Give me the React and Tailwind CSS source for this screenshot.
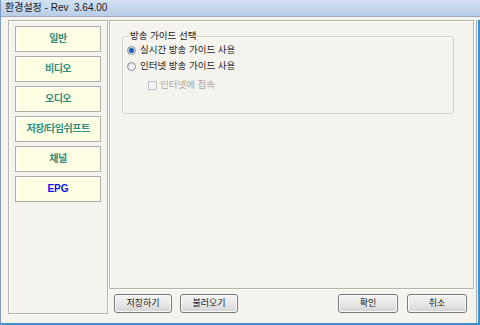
const FONT = "[font-family:'Liberation_Sans','Noto_Sans_CJK_KR',sans-serif]";

const tabs = [
  { label: "일반" },
  { label: "비디오" },
  { label: "오디오" },
  { label: "저장/타임쉬프트" },
  { label: "채널" },
  { label: "EPG", active: true },
];

function Radio({ checked, label }) {
  return (
    <div className="flex items-center h-[16px] gap-[4px]">
      <span className="w-[9px] h-[9px] rounded-full border border-[#8a8f96] bg-gradient-to-br from-[#d8dbe0] to-[#ffffff] flex items-center justify-center">
        {checked && <span className="w-[5px] h-[5px] rounded-full bg-[#1d5fb8] shadow-[0_0_1px_#6aa6e8]" />}
      </span>
      <span className="text-[9.5px] text-[#1a1a1a] leading-none">{label}</span>
    </div>
  );
}

function Button({ children, w }) {
  return (
    <button className={`${w} h-[19px] rounded-[3px] border border-[#7a7a7a] bg-gradient-to-b from-[#f4f4f4] via-[#e8e8e8] to-[#d3d3d3] shadow-[inset_0_0_0_1px_#fbfbfb] text-[9px] text-[#1a1a1a] leading-none`}>
      {children}
    </button>
  );
}

export default function App() {
  return (
    <div className={`w-[480px] h-[325px] overflow-hidden bg-[#f4f3ee] flex flex-col border-l border-[#7d9cc2] border-b-2 border-b-[#3b8fd2] ${FONT}`}>
      {/* Title bar */}
      <div className="h-[17px] shrink-0 bg-gradient-to-b from-[#d3e1f2] to-[#b9cde7] border-b border-[#9aa9bb] flex items-center pl-[4px]">
        <span className="text-[10px] text-[#1a1a1a] whitespace-pre leading-none">환경설정 - Rev  3.64.00</span>
      </div>

      {/* Body */}
      <div className="flex-1 flex pt-[3px] pl-[7px]">
        {/* Left tabs */}
        <div className="w-[100px] h-[294px] border border-[#b5b3aa] shadow-[inset_1px_1px_0_#ffffff,1px_1px_0_#ffffff] pt-[5px] pl-[6px] flex flex-col gap-[4px]">
          {tabs.map((t) => (
            <div
              key={t.label}
              className="w-[86px] h-[26px] bg-[#ffffe3] border border-[#aeada5] shadow-[inset_1px_1px_0_#ffffff] flex items-center justify-center"
            >
              <span
                className={
                  t.active
                    ? "text-[10px] font-bold text-[#1010f0] leading-none"
                    : "text-[10px] font-semibold text-[#2f8c7c] tracking-[-0.5px] leading-none"
                }
              >
                {t.label}
              </span>
            </div>
          ))}
        </div>

        {/* Right column */}
        <div className="w-[365px] ml-[1px] flex flex-col">
          <div className="h-[269px] border border-[#b5b3aa] shadow-[inset_1px_1px_0_#ffffff,1px_1px_0_#ffffff] pl-[12px] pt-[9px]">
            <fieldset className="w-[332px] h-[84px] border border-[#d3d1c5] rounded-[3px] shadow-[inset_1px_1px_0_#ffffff] pl-[4px]">
              <legend className="ml-[2px] px-[1px] text-[9.5px] text-[#1a1a1a] leading-[12px]">방송 가이드 선택</legend>
              <div className="flex flex-col">
                <Radio checked label="실시간 방송 가이드 사용" />
                <Radio label="인터넷 방송 가이드 사용" />
                <div className="flex items-center h-[20px] gap-[3px] pl-[21px] mt-[1px]">
                  <span className="w-[9px] h-[9px] border border-[#c2c2c2] bg-[#f4f4f4]" />
                  <span className="text-[9.5px] text-[#a8a8a8] leading-none">인터넷에 접속</span>
                </div>
              </div>
            </fieldset>
          </div>

          <div className="flex items-center mt-[5px] pl-[5px] pr-[7px]">
            <div className="flex gap-[8px]">
              <Button w="w-[58px]">저장하기</Button>
              <Button w="w-[58px]">불러오기</Button>
            </div>
            <div className="flex gap-[9px] ml-auto">
              <Button w="w-[60px]">확인</Button>
              <Button w="w-[60px]">취소</Button>
            </div>
          </div>
        </div>

        <div className="ml-auto w-[4px] border-l border-[#a9a9a9] border-r-2 border-r-[#3b8fd2]" />
      </div>
    </div>
  );
}
